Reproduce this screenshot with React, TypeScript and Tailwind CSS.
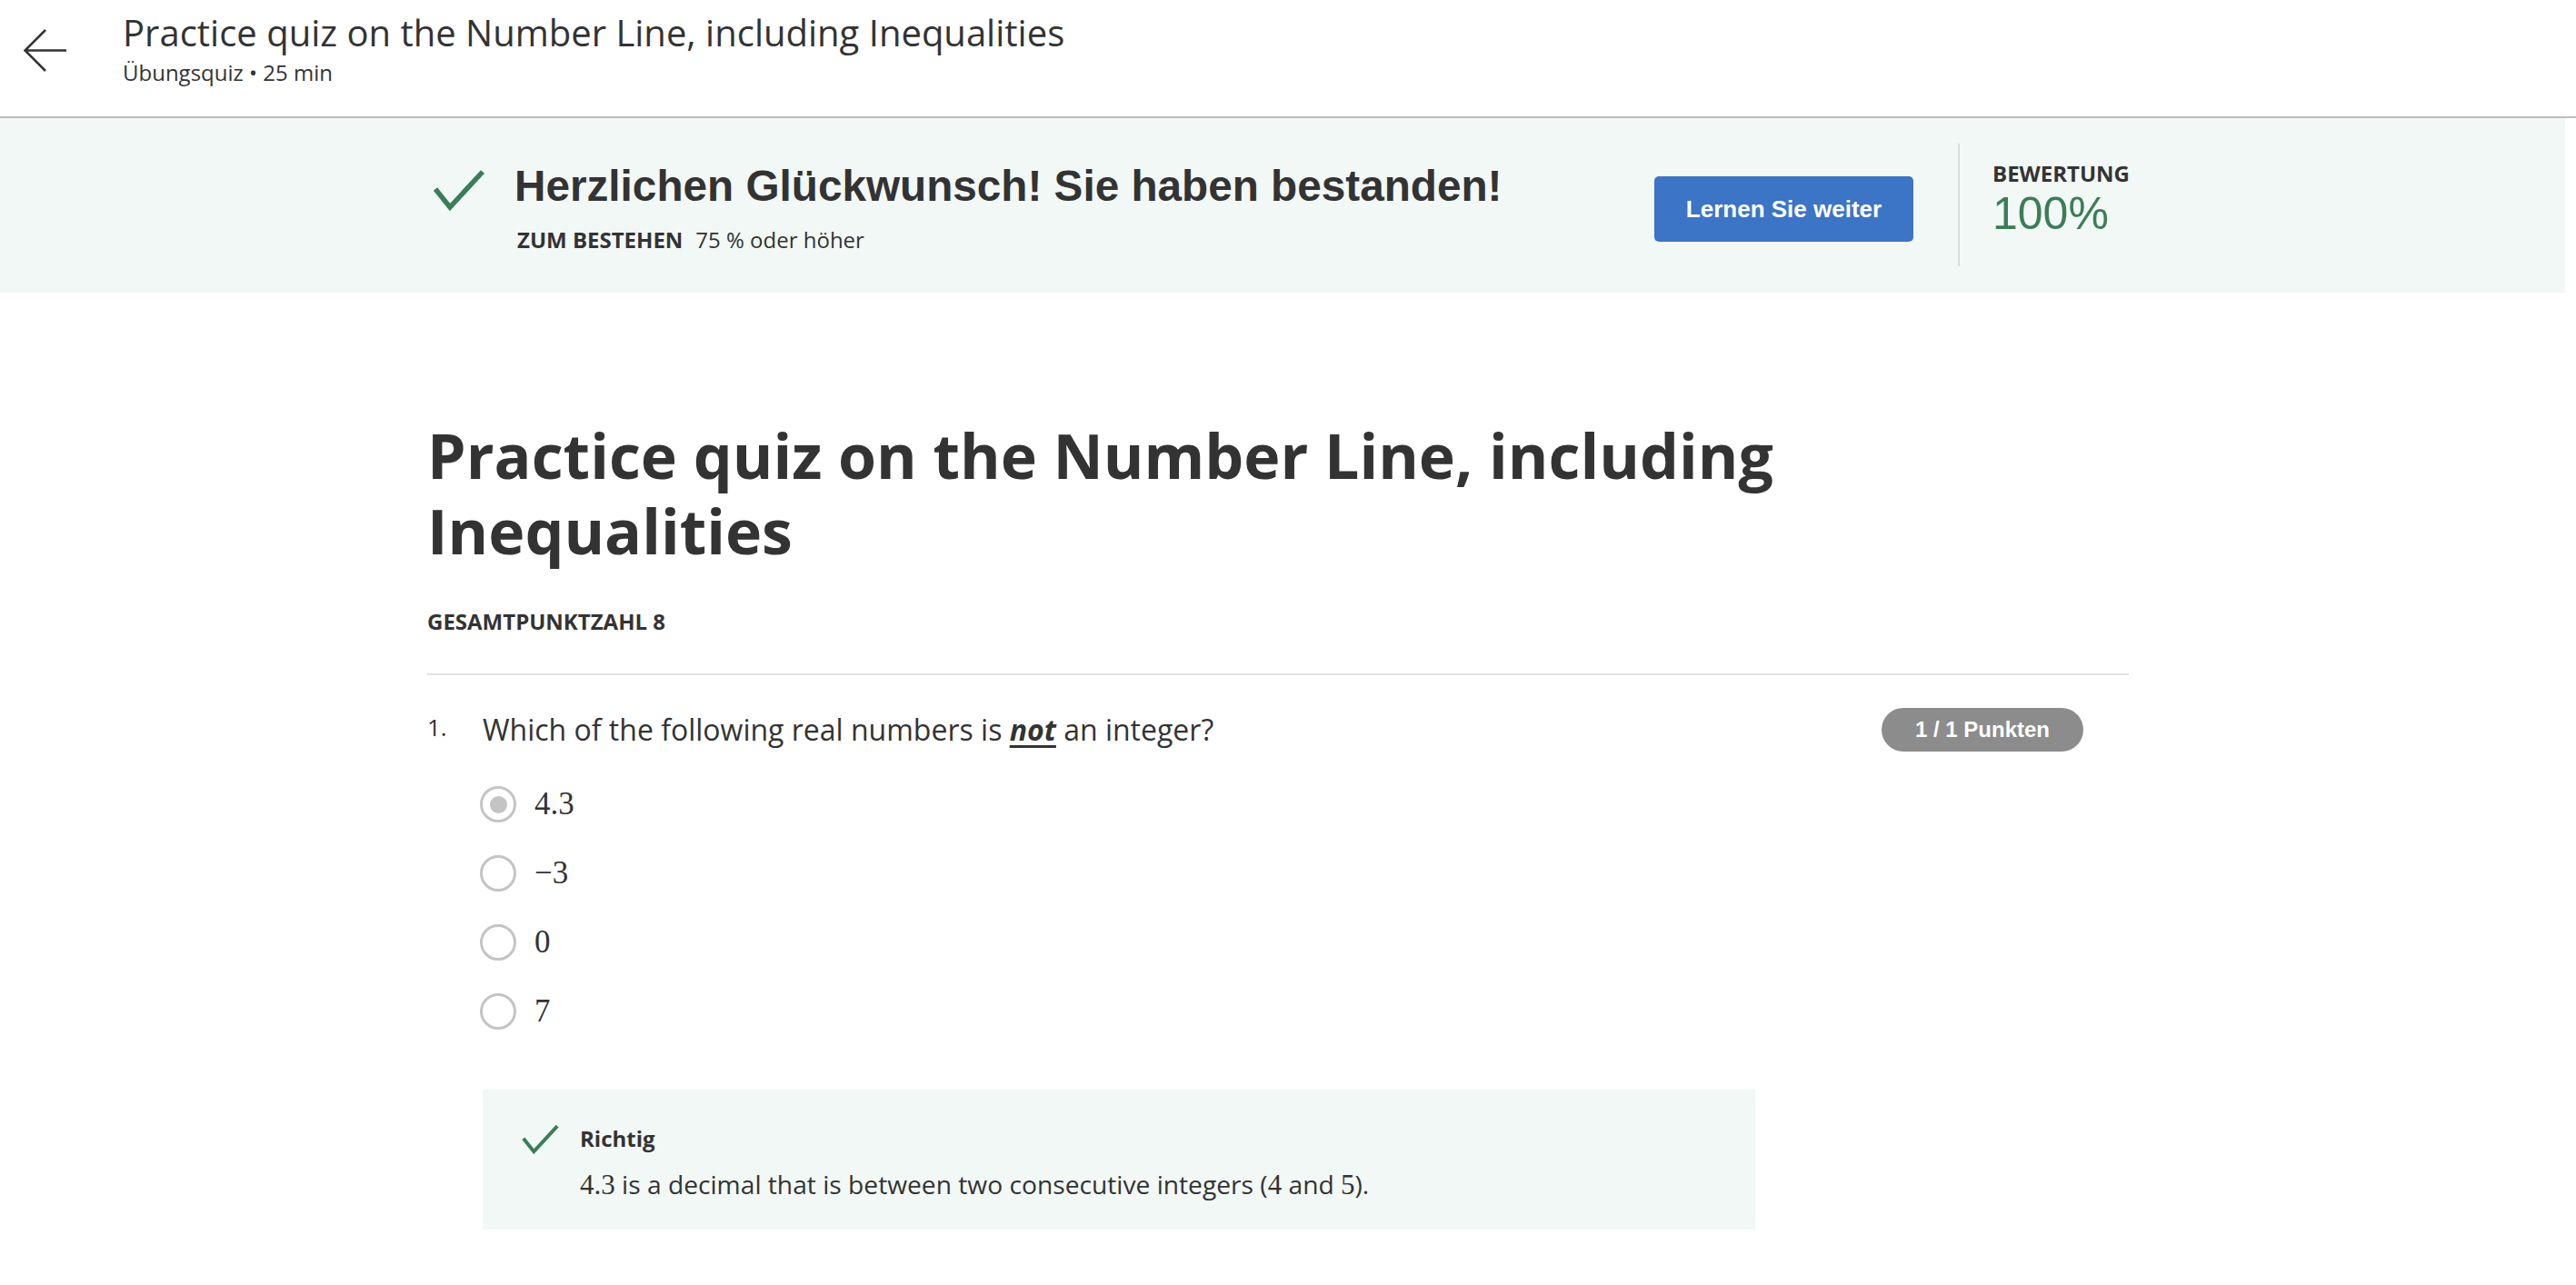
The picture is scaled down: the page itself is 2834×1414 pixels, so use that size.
import React from "react";

const sans = "font-['Open_Sans',_'Liberation_Sans',_sans-serif]";
const helv = "font-['Liberation_Sans',_Arial,_sans-serif]";
const serif = "font-['Liberation_Serif',_'Times_New_Roman',_serif]";

function CheckMark({ className }: { className?: string }) {
  return (
    <svg viewBox="0 0 58 46" className={className} fill="none">
      <polyline points="3,22 19,42 55,3" stroke="#3b7d57" strokeWidth="5.5" strokeLinecap="butt" strokeLinejoin="miter" />
    </svg>
  );
}

function Radio({ checked }: { checked?: boolean }) {
  return (
    <div className="flex h-[40px] w-[40px] shrink-0 items-center justify-center rounded-full border-[3px] border-[#c4c4c4] bg-white">
      {checked && <div className="h-[19px] w-[19px] rounded-full bg-[#c4c4c4]" />}
    </div>
  );
}

const options = [
  { label: "4.3", checked: true },
  { label: "\u22123", checked: false },
  { label: "0", checked: false },
  { label: "7", checked: false },
];

export default function App() {
  return (
    <div className={`min-h-screen bg-white text-[#333333] ${sans}`}>
      {/* top bar */}
      <header className="flex h-[130px] border-b-2 border-[#bdbdbd]">
        <button className="w-[135px] shrink-0 self-start pl-[26px] pt-[32px]">
          <svg viewBox="0 0 48 48" className="h-[48px] w-[48px]" fill="none">
            <path d="M47 23.5H1.5M24 1L1.5 23.5L24 46" stroke="#333" strokeWidth="2.6" />
          </svg>
        </button>
        <div className="pt-[12px]">
          <h1 className="text-[40px] leading-[48px] font-normal">
            Practice quiz on the Number Line, including Inequalities
          </h1>
          <div className="mt-[5px] text-[24px] leading-[30px]">Übungsquiz • 25 min</div>
        </div>
      </header>

      <div className="w-[2822px]">
        {/* result banner */}
        <div className="h-[192px] bg-[#f2f8f6]">
          <div className="mx-auto flex w-[1882px] items-start pr-[10px]">
            <CheckMark className="ml-[6px] mt-[56px] h-[46px] w-[58px] shrink-0" />
            <div className="ml-[32px] mt-[47px]">
              <div className={`text-[47.7px] leading-[56px] font-bold text-[#333] ${helv}`}>
                Herzlichen Glückwunsch! Sie haben bestanden!
              </div>
              <div className="mt-[15px] ml-[3px] flex text-[24px] leading-[31px]">
                <span className="font-bold">ZUM BESTEHEN</span>
                <span className="ml-[14px]">75 % oder höher</span>
              </div>
            </div>
            <div className="flex-1" />
            <button
              className={`mt-[64px] h-[72px] w-[285px] rounded-[5px] bg-[#3c74c6] text-[26px] font-bold text-white ${helv}`}
            >
              Lernen Sie weiter
            </button>
            <div className="ml-[49px] mt-[28px] h-[135px] w-[2px] bg-[#dcdcdc]" />
            <div className="ml-[36px] mt-[46px] w-[150px]">
              <div className="text-[24px] leading-[30px] font-bold">BEWERTUNG</div>
              <div className={`mt-[1px] text-[50px] leading-[56px] text-[#3b7d57] ${helv}`}>100%</div>
            </div>
          </div>
        </div>

        {/* quiz body */}
        <div className="mx-auto w-[1882px] pr-[10px] pb-[60px]">
          <h2 className="mt-[137px] w-[1872px] text-[68px] leading-[83px] font-bold">
            Practice quiz on the Number Line, including Inequalities
          </h2>
          <div className="mt-[43px] text-[24px] leading-[31px] font-bold">GESAMTPUNKTZAHL 8</div>
          <div className="mt-[42px] h-[2px] bg-[#e1e1e1]" />

          <div className="mt-[36px] flex">
            <div className="w-[61px] shrink-0 pt-[6px] text-[26px] leading-[30px]">1.</div>
            <div className="flex-1">
              <div className="flex items-center pr-[50px]">
                <p className="flex-1 text-[32px] leading-[42px]">
                  Which of the following real numbers is{" "}
                  <span className="font-bold italic underline decoration-[3px] underline-offset-[5px]">not</span> an
                  integer?
                </p>
                <span
                  className={`flex h-[48px] w-[222px] items-center justify-center rounded-full bg-[#8c8c8c] text-[24px] font-bold text-white ${helv}`}
                >
                  1 / 1 Punkten
                </span>
              </div>

              <div className="mt-[20px]">
                {options.map((o) => (
                  <label key={o.label} className="flex h-[76px] items-center -ml-[3px]">
                    <Radio checked={o.checked} />
                    <span className={`ml-[20px] text-[35px] leading-[76px] ${serif}`}>{o.label}</span>
                  </label>
                ))}
              </div>

              <div className="mt-[48px] w-[1400px] bg-[#f2f8f6] pb-[29px] pl-[42px] pt-[38px]">
                <div className="flex items-start">
                  <CheckMark className="h-[33px] w-[43px] shrink-0" />
                  <div className="ml-[22px]">
                    <div className="text-[24px] leading-[32px] font-bold">Richtig</div>
                    <p className="mt-[14px] text-[28.2px] leading-[40px]">
                      <span className={`${serif} text-[31px]`}>4.3</span> is a decimal that is between two
                      consecutive integers (<span className={`${serif} text-[31px]`}>4</span> and{" "}
                      <span className={`${serif} text-[31px]`}>5</span>).
                    </p>
                  </div>
                </div>
              </div>
            </div>
          </div>
        </div>
      </div>
    </div>
  );
}
